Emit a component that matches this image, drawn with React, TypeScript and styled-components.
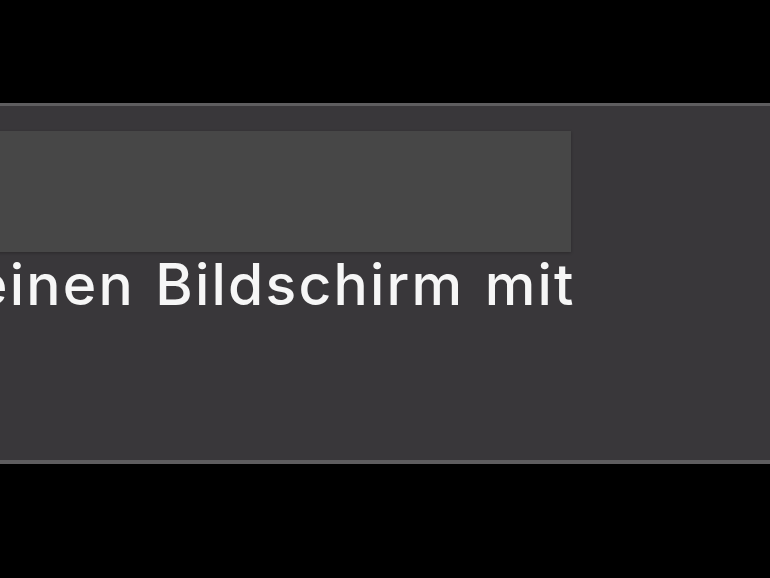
import styled, { createGlobalStyle } from 'styled-components';

const GlobalStyle = createGlobalStyle`
  html, body {
    margin: 0;
    padding: 0;
    background: #000;
    overflow: hidden;
  }
  body {
    font-family: Inter, "Liberation Sans", sans-serif;
  }
`;

const Screen = styled.div`
  width: 770px;
  height: 578px;
  overflow: hidden;
  padding-top: 103px;
  box-sizing: border-box;
`;

const Sheet = styled.section`
  margin-left: -26px;
  width: 900px;
  height: 361px;
  box-sizing: border-box;
  background: #39373a;
  border-top: 3px solid #5e5d5f;
  border-bottom: 4px solid #5e5d5f;
  padding-top: 25px;
`;

const Field = styled.div`
  width: 597px;
  height: 121px;
  background: #474747;
  box-shadow: 0 1px 3px rgba(0, 0, 0, 0.25);
`;

const Caption = styled.p`
  margin: 0;
  padding-top: 1px;
  font-size: 57px;
  line-height: 64px;
  font-weight: 500;
  letter-spacing: 2.2px;
  word-spacing: 3px;
  color: #f6f6f6;
  white-space: nowrap;
`;

export default function App() {
  return (
    <Screen>
      <GlobalStyle />
      <Sheet>
        <Field />
        <Caption>einen Bildschirm mit</Caption>
      </Sheet>
    </Screen>
  );
}
